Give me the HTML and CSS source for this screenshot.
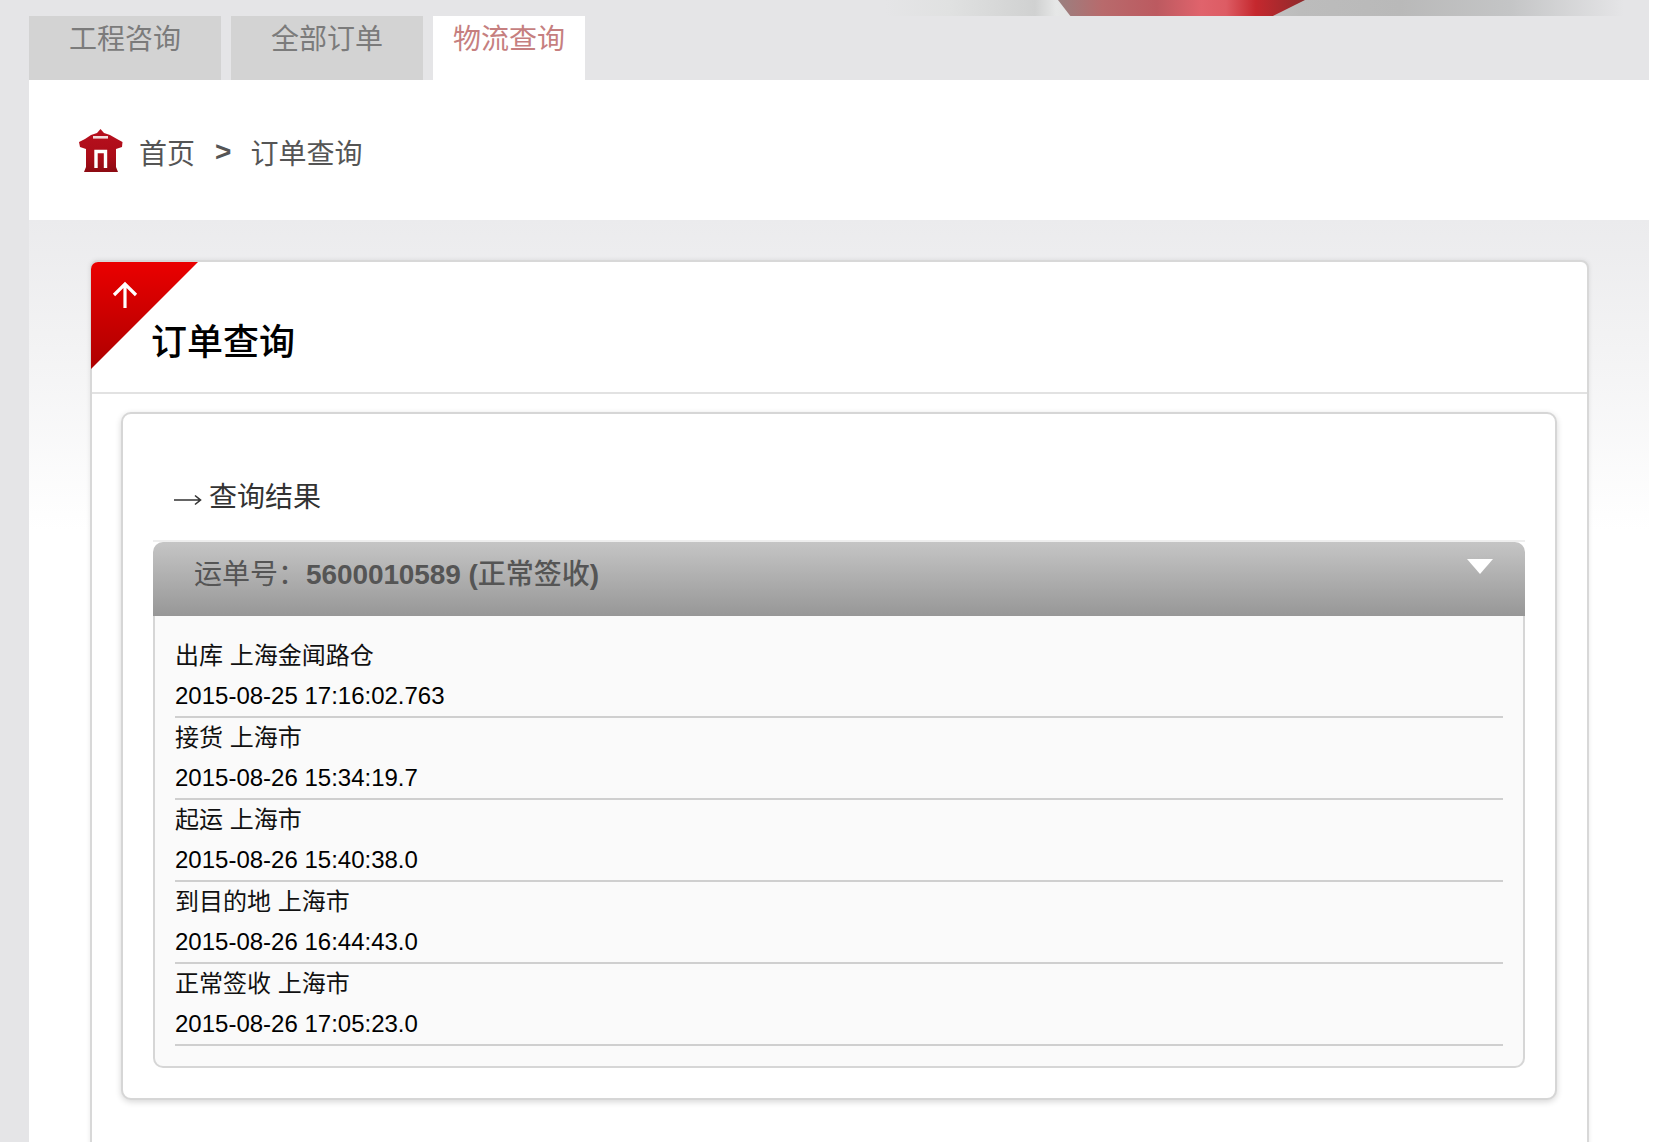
FILE: index.html
```
<!DOCTYPE html>
<html lang="zh-CN">
<head>
<meta charset="utf-8">
<title>订单查询</title>
<link rel="stylesheet" href="styles.css">
</head>
<body>
<div class="page">
  <div class="banner"><div class="banner-red"></div></div>
  <div class="main">
    <nav class="tabs">
      <a class="tab">工程咨询</a>
      <a class="tab">全部订单</a>
      <a class="tab tab-active">物流查询</a>
    </nav>
    <div class="crumbs">
      <svg class="home" viewBox="0 0 44 43" width="44" height="43">
        <defs><linearGradient id="hg" x1="0" y1="0" x2="0" y2="1"><stop offset="0" stop-color="#b8101e"/><stop offset="0.65" stop-color="#ab0c18"/><stop offset="1" stop-color="#8c0a12"/></linearGradient></defs>
        <path fill="url(#hg)" d="M21.5 0 25 4 31 6 38 10 43.5 13 43 18 37 20V38L39 43H5L7 38V20L1 18 0 13 6 10 12 6 18 4Z"/>
        <rect x="14" y="7" width="15" height="2.6" fill="#f3dcdc"/>
        <path fill="none" stroke="#fff" stroke-width="3.4" d="M17 39V22.5H26.5V39"/>
      </svg>
      <span class="crumb">首页</span>
      <span class="crumb-sep">&gt;</span>
      <span class="crumb-cur">订单查询</span>
    </div>
    <div class="content">
      <section class="card">
        <div class="ribbon">
          <svg viewBox="0 0 108 107" width="108" height="107"><path fill="none" stroke="#fff" stroke-width="3.2" d="M34 24V46M23 33 34 22 45 33"/></svg>
        </div>
        <h1 class="card-title">订单查询</h1>
        <div class="card-body">
          <div class="box">
            <h2 class="box-title">
              <svg class="box-arrow" viewBox="0 0 28 12" width="28" height="12"><path fill="none" stroke="#333" stroke-width="1.6" d="M0 6H26M21 1.5 26.5 6 21 10.5"/></svg>
              <span>查询结果</span>
            </h2>
            <div class="panel">
              <div class="panel-head">
                <div class="panel-text">运单号：<b>5600010589 (</b><span class="panel-status">正常签收</span><b>)</b></div>
                <i class="caret"></i>
              </div>
              <div class="panel-body">
                <div class="row"><p class="place">出库 上海金闻路仓</p><p class="time">2015-08-25 17:16:02.763</p></div>
                <div class="row"><p class="place">接货 上海市</p><p class="time">2015-08-26 15:34:19.7</p></div>
                <div class="row"><p class="place">起运 上海市</p><p class="time">2015-08-26 15:40:38.0</p></div>
                <div class="row"><p class="place">到目的地 上海市</p><p class="time">2015-08-26 16:44:43.0</p></div>
                <div class="row"><p class="place">正常签收 上海市</p><p class="time">2015-08-26 17:05:23.0</p></div>
              </div>
            </div>
          </div>
        </div>
      </section>
    </div>
  </div>
</div>
</body>
</html>
```
FILE: styles.css
```
* { box-sizing: border-box; }
html, body { margin: 0; padding: 0; background: #fff; }
body {
  font-family: "Liberation Sans", "Noto Sans CJK SC", sans-serif;
  overflow: hidden;
}
p, h1, h2 { margin: 0; font-weight: normal; }

.page {
  width: 1649px;
  height: 1142px;
  overflow: hidden;
  background: #e5e5e7;
}

.banner {
  height: 16px;
  background: linear-gradient(90deg, #e5e5e7 0, #e5e5e7 885px, #e0e1e1 950px, #d0d1d1 1035px, #e6e7e7 1056px, #bcbcbc 1300px, #b9b9b9 1400px, #c4c5c6 1510px, #e5e5e7 1624px);
}
.banner-red {
  width: 247px;
  height: 16px;
  margin-left: 1058px;
  clip-path: polygon(0 0, 100% 0, 87% 100%, 5% 100%);
  background: linear-gradient(90deg, #9a8080 0, #b86a6c 18%, #bc5a60 40%, #e0636c 58%, #dd5c64 68%, #c5282e 80%, #8e2a2c 100%);
}

.main { margin-left: 29px; }

.tabs { display: flex; gap: 10px; height: 64px; }
.tab {
  width: 192px;
  height: 64px;
  background: #d3d3d3;
  color: #7b7b7b;
  font-size: 28px;
  line-height: 48px;
  text-align: center;
}
.tab-active { width: 152px; background: #fff; color: #c67f7f; }

.crumbs {
  display: flex;
  align-items: center;
  height: 140px;
  padding: 0 0 0 50px;
  background: #fff;
  font-size: 28px;
  color: #555;
}
.home { margin: 0 16px 0 0; }
.crumb, .crumb-cur { padding-top: 4px; }
.crumb-sep { margin: 0 19px 0 20px; padding-top: 4px; font-weight: 700; color: #555; }

.content {
  padding: 40px 60px 0 61px;
  background: linear-gradient(#ebebed 0, #f3f3f4 130px, #fff 310px);
  height: 922px;
}

.card {
  position: relative;
  height: 1000px;
  background: #fff;
  border: 2px solid #d8d8d8;
  border-radius: 8px 8px 0 0;
  box-shadow: 0 0 5px rgba(0, 0, 0, 0.09);
}
.ribbon {
  position: absolute;
  left: -1px;
  top: 0;
  width: 107px;
  height: 107px;
  border-top-left-radius: 7px;
  clip-path: polygon(0 0, 100% 0, 0 100%);
  background: linear-gradient(#ea0000, #ad0000);
}
.ribbon svg { display: block; }

.card-title {
  height: 132px;
  padding: 56px 0 0 59px;
  border-bottom: 2px solid #e2e2e2;
  font-size: 36px;
  font-weight: 500;
  line-height: 50px;
  color: #000;
}

.card-body { padding: 18px 30px 0 29px; }

.box {
  height: 688px;
  padding: 0 30px 0 30px;
  background: #fff;
  border: 2px solid #d6d6d6;
  border-radius: 10px;
  box-shadow: 0 2px 6px rgba(0, 0, 0, 0.16);
}
.box-title {
  display: flex;
  align-items: center;
  height: 126px;
  padding: 63px 0 21px 21px;
  font-size: 28px;
  line-height: 42px;
  color: #333;
}
.box-arrow { margin: 4px 7px 0 0; }

.panel { border-top: 2px solid #eee; }
.panel-head {
  display: flex;
  justify-content: space-between;
  align-items: flex-start;
  height: 74px;
  padding: 0 32px 0 41px;
  border-radius: 10px 10px 0 0;
  background: linear-gradient(#c5c5c5, #979797);
}
.panel-text {
  font-size: 28px;
  line-height: 66px;
  color: #555;
}
.panel-text b { font-weight: 700; letter-spacing: -0.1px; }
.panel-status { font-weight: 500; }
.caret {
  width: 0;
  height: 0;
  margin-top: 17px;
  border-style: solid;
  border-width: 15px 13px 0;
  border-color: #fff transparent transparent;
}

.panel-body {
  padding: 20px 20px 20px;
  background: #fafafa;
  border: 2px solid #d6d6d6;
  border-top: 0;
  border-radius: 0 0 10px 10px;
}
.row { height: 82px; border-bottom: 2px solid #cfcfcf; }
.place, .time { font-size: 24px; line-height: 40px; }
.place { color: #111; }
.time { color: #000; }
```
